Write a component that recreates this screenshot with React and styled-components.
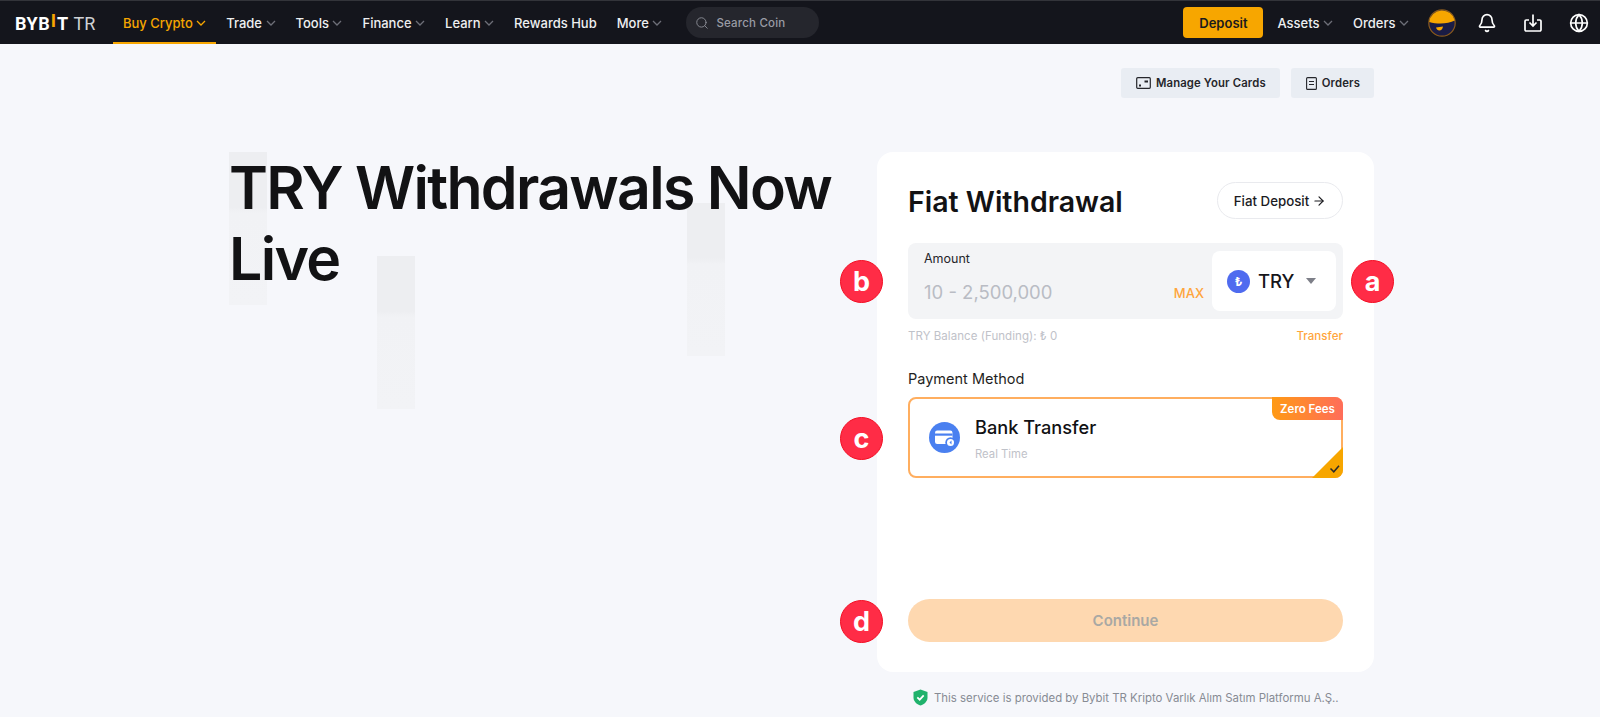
import React from "react";
import styled, { createGlobalStyle } from "styled-components";
import { Search, Bell, Globe, ArrowRight } from "lucide-react";

const GlobalStyle = createGlobalStyle`
  html, body {
    margin: 0;
    padding: 0;
    height: 717px;
    overflow: hidden;
    background: #f6f7fb;
    font-family: Inter, "Liberation Sans", sans-serif;
    color: #121214;
  }
  * { box-sizing: border-box; }
`;

const Header = styled.header`
  height: 44px;
  display: flex;
  align-items: center;
  justify-content: space-between;
  background: #14151c;
  border-top: 1px solid #33343a;
  padding: 0 11px 0 15px;
`;

const HeaderSide = styled.div`
  height: 100%;
  display: flex;
  align-items: center;
`;

const Logo = styled.div`
  width: 98px;
  margin-top: 1px;
  display: flex;
  align-items: baseline;
  font-family: Roboto, sans-serif;
  font-size: 18px;
  font-weight: 700;
  letter-spacing: 0.5px;
  color: #fff;
`;

const LogoMark = styled.span`
  color: #f7a600;
  position: relative;
  top: -3px;
  margin: 0 0.5px;
`;

const LogoSuffix = styled.span`
  margin-left: 5px;
  font-weight: 400;
  color: #cfd0d4;
  letter-spacing: 0;
`;

const NavItem = styled.a`
  height: 100%;
  display: flex;
  align-items: center;
  gap: 3.5px;
  padding: 2px 10px 0;
  font-size: 13px;
  font-weight: 500;
  white-space: nowrap;
  color: ${(p) => (p.$active ? "#f7a600" : "#eeeff1")};
  border-bottom: 2px solid ${(p) => (p.$active ? "#f7a600" : "transparent")};
`;

const Chevron = styled.svg`
  width: 10px;
  height: 10px;
  fill: none;
  stroke: ${(p) => (p.$active ? "#f7a600" : "#6d6f78")};
  stroke-width: 1.3;
`;

const SearchBox = styled.div`
  width: 133px;
  height: 31px;
  margin-left: 14px;
  padding: 0 9px;
  display: flex;
  align-items: center;
  gap: 7px;
  border-radius: 16px;
  background: #25262d;
  font-size: 11.5px;
  font-weight: 500;
  color: #9a9ca5;
  letter-spacing: 0.2px;
`;

const DepositButton = styled.button`
  width: 80px;
  height: 31px;
  margin-right: 4px;
  border: 0;
  border-radius: 4px;
  background: #f7a600;
  color: #1a1a1e;
  font: 600 13px Inter, sans-serif;
`;

const Avatar = styled.svg`
  width: 28px;
  height: 28px;
  margin-left: 9px;
`;

const HeaderIcons = styled.div`
  margin-left: 21px;
  display: flex;
  align-items: center;
  gap: 26px;
  color: #fff;
`;

const Page = styled.main`
  width: 1145px;
  margin-left: 229px;
`;

const Toolbar = styled.div`
  padding-top: 24px;
  display: flex;
  justify-content: flex-end;
  gap: 11px;
`;

const ToolButton = styled.button`
  height: 30px;
  padding: 0 14px 0 15px;
  display: flex;
  align-items: center;
  gap: 5px;
  border: 0;
  border-radius: 3px;
  background: #e9edf3;
  color: #25262b;
  font: 600 11.3px Inter, sans-serif;
  letter-spacing: 0.15px;
`;

const Content = styled.div`
  margin-top: 54px;
  display: flex;
  justify-content: space-between;
`;

const Hero = styled.section`
  position: relative;
  width: 640px;
`;

const GhostBar = styled.div`
  position: absolute;
  left: ${(p) => p.$left}px;
  top: ${(p) => p.$top}px;
  width: 38px;
  height: 153px;
  background: linear-gradient(#edeef1 0%, #edeef1 36%, #f1f2f5 40%, #f2f3f6 100%);
`;

const HeroTitle = styled.h1`
  position: relative;
  margin: 0;
  font-size: 59px;
  line-height: 71px;
  font-weight: 600;
  letter-spacing: -1.7px;
  color: #121214;
`;

const Side = styled.div`
  width: 497px;
`;

const Card = styled.section`
  height: 520px;
  padding: 30px 31px;
  display: flex;
  flex-direction: column;
  border-radius: 16px;
  background: #fff;
`;

const CardHead = styled.div`
  display: flex;
  align-items: center;
  justify-content: space-between;
`;

const CardTitle = styled.h2`
  margin: 3px 0 0;
  font-size: 28.5px;
  line-height: 34px;
  font-weight: 600;
`;

const DepositLink = styled.button`
  width: 126px;
  height: 37px;
  display: flex;
  align-items: center;
  justify-content: center;
  gap: 3px;
  border: 1px solid #e9eaee;
  border-radius: 19px;
  background: #fff;
  color: #1b1b1f;
  font: 500 13.3px Inter, sans-serif;
`;

const AmountBox = styled.div`
  position: relative;
  height: 76px;
  margin-top: 24px;
  padding: 8px 7px 8px 16px;
  display: flex;
  align-items: stretch;
  justify-content: space-between;
  border-radius: 8px;
  background: #f3f4f6;
`;

const AmountField = styled.div`
  flex: 1;
  display: flex;
  flex-direction: column;
`;

const AmountLabel = styled.div`
  font-size: 12.5px;
  line-height: 16px;
  color: #25262b;
`;

const AmountRow = styled.div`
  margin-top: 12px;
  padding-right: 8px;
  display: flex;
  align-items: center;
  justify-content: space-between;
`;

const AmountHint = styled.div`
  font-size: 18.5px;
  line-height: 26px;
  color: #b9bcc4;
`;

const MaxLink = styled.span`
  margin-top: 2px;
  font-size: 13px;
  font-weight: 500;
  color: #ffa53c;
`;

const CurrencyPicker = styled.div`
  width: 124px;
  padding-left: 15px;
  display: flex;
  align-items: center;
  border-radius: 8px;
  background: #fff;
  font-size: 18.5px;
  font-weight: 500;
  color: #16161a;
`;

const CoinBadge = styled.span`
  width: 23px;
  height: 23px;
  margin-right: 8px;
  display: flex;
  align-items: center;
  justify-content: center;
  border-radius: 50%;
  background: #4f6bef;
  color: #fff;
  font-size: 12px;
  font-weight: 700;
`;

const Caret = styled.span`
  width: 0;
  height: 0;
  margin-left: 12px;
  border-left: 5px solid transparent;
  border-right: 5px solid transparent;
  border-top: 6.5px solid #7d7f88;
`;

const BalanceRow = styled.div`
  margin-top: 9px;
  display: flex;
  justify-content: space-between;
  font-size: 11.5px;
  line-height: 16px;
  letter-spacing: 0.05px;
  color: #bfc2c9;
`;

const TransferLink = styled.span`
  font-weight: 500;
  color: #ffa53c;
`;

const SectionLabel = styled.div`
  margin-top: 25px;
  font-size: 14.5px;
  line-height: 20px;
  color: #1f1f23;
`;

const MethodCard = styled.div`
  position: relative;
  height: 81px;
  margin-top: 8px;
  padding-left: 19px;
  display: flex;
  align-items: center;
  gap: 15px;
  border: 2px solid #ffae5f;
  border-radius: 8px;
  background: #fff;
`;

const MethodIcon = styled.svg`
  width: 31px;
  height: 31px;
  flex: none;
`;

const MethodText = styled.div`
  margin-top: 1px;
`;

const MethodName = styled.div`
  font-size: 18.2px;
  line-height: 24px;
  font-weight: 500;
  color: #111114;
`;

const MethodNote = styled.div`
  margin-top: 7px;
  font-size: 11.3px;
  line-height: 16px;
  color: #bfc2c9;
`;

const FeeTag = styled.div`
  position: absolute;
  top: -2px;
  right: -2px;
  width: 71px;
  height: 23px;
  display: flex;
  align-items: center;
  justify-content: center;
  border-radius: 0 8px 0 8px;
  background: linear-gradient(90deg, #ff9a14, #ff6d5a);
  color: #fff;
  font-size: 11.5px;
  font-weight: 600;
`;

const CornerMark = styled.svg`
  position: absolute;
  right: -2px;
  bottom: -2px;
  width: 31px;
  height: 31px;
`;

const ContinueButton = styled.button`
  position: relative;
  width: 100%;
  height: 43px;
  margin-top: auto;
  border: 0;
  border-radius: 22px;
  background: #fed8b0;
  color: #a9a8a4;
  font: 600 15px Inter, sans-serif;
`;

const Marker = styled.span`
  position: absolute;
  top: 50%;
  ${(p) => (p.$right ? "right: -51px;" : `left: ${p.$left ?? -68}px;`)}
  width: 43px;
  height: 43px;
  margin-top: -21px;
  display: flex;
  align-items: center;
  justify-content: center;
  border: 1px solid #f30d22;
  border-radius: 50%;
  background: #ff2c46;
  color: #fff;
  font: 700 27px/1 Inter, sans-serif;
`;

const Notice = styled.div`
  margin-top: 17px;
  padding-left: 36px;
  display: flex;
  align-items: center;
  gap: 6px;
  font-size: 11.4px;
  line-height: 16px;
  white-space: nowrap;
  color: #878b94;
`;

const Caretdown = ({ active }) => (
  <Chevron viewBox="0 0 10 10" $active={active}>
    <path d="M1 3l4 4 4-4" />
  </Chevron>
);

const navItems = [
  { label: "Buy Crypto", menu: true, active: true },
  { label: "Trade", menu: true },
  { label: "Tools", menu: true },
  { label: "Finance", menu: true },
  { label: "Learn", menu: true },
  { label: "Rewards Hub" },
  { label: "More", menu: true },
];

function App() {
  return (
    <>
      <GlobalStyle />
      <Header>
        <HeaderSide>
          <Logo>
            BYB<LogoMark>I</LogoMark>T<LogoSuffix>TR</LogoSuffix>
          </Logo>
          {navItems.map((item) => (
            <NavItem key={item.label} $active={item.active}>
              {item.label}
              {item.menu && <Caretdown active={item.active} />}
            </NavItem>
          ))}
          <SearchBox>
            <Search size={14} strokeWidth={1.6} color="#8b8d96" />
            Search Coin
          </SearchBox>
        </HeaderSide>
        <HeaderSide>
          <DepositButton>Deposit</DepositButton>
          <NavItem>
            Assets
            <Caretdown />
          </NavItem>
          <NavItem>
            Orders
            <Caretdown />
          </NavItem>
          <Avatar viewBox="0 0 28 28">
            <circle cx="14" cy="14" r="13.2" fill="#1a1c45" stroke="#8a5a1c" strokeWidth="1.2" />
            <path d="M1.2 13a13 13 0 0 1 25.6-1.500C20 15 10 15.500 1.2 13z" fill="#f7a600" />
            <path d="M8 18.500l7-1c-.4 2.800-1.800 4-3.600 4-1.600 0-2.900-1.200-3.400-3z" fill="#f7a600" />
          </Avatar>
          <HeaderIcons>
            <Bell size={20} strokeWidth={2} />
            <svg width="20" height="20" viewBox="0 0 20 20" fill="none" stroke="currentColor" strokeWidth="1.7">
              <path d="M6 7H3.200A1.200 1.200 0 0 0 2 8.200v8.600A1.200 1.200 0 0 0 3.200 18h13.600a1.200 1.200 0 0 0 1.200-1.200V8.200A1.200 1.200 0 0 0 16.800 7H14" />
              <path d="M10 1.500v11M6.500 9.500L10 13l3.500-3.500" />
            </svg>
            <Globe size={20} strokeWidth={2} />
          </HeaderIcons>
        </HeaderSide>
      </Header>
      <Page>
        <Toolbar>
          <ToolButton>
            <svg width="15" height="12" viewBox="0 0 15 12" fill="none" stroke="#25262b" strokeWidth="1.2">
              <rect x="0.700" y="0.700" width="13.600" height="10.600" rx="1" />
              <path d="M8.500 4.500h3.500M3 8.500h2" strokeWidth="1.800" />
            </svg>
            Manage Your Cards
          </ToolButton>
          <ToolButton>
            <svg width="11" height="13" viewBox="0 0 11 13" fill="none" stroke="#25262b" strokeWidth="1.100">
              <rect x="0.600" y="0.600" width="9.800" height="11.800" rx="1" />
              <path d="M3 4.500h5M3 7.500h5" />
            </svg>
            Orders
          </ToolButton>
        </Toolbar>
        <Content>
          <Hero>
            <GhostBar $left={0} $top={0} />
            <GhostBar $left={148} $top={104} />
            <GhostBar $left={458} $top={51} />
            <HeroTitle>TRY Withdrawals Now Live</HeroTitle>
          </Hero>
          <Side>
            <Card>
              <CardHead>
                <CardTitle>Fiat Withdrawal</CardTitle>
                <DepositLink>
                  Fiat Deposit
                  <ArrowRight size={14} strokeWidth={2} />
                </DepositLink>
              </CardHead>
              <AmountBox>
                <Marker>b</Marker>
                <AmountField>
                  <AmountLabel>Amount</AmountLabel>
                  <AmountRow>
                    <AmountHint>10 - 2,500,000</AmountHint>
                    <MaxLink>MAX</MaxLink>
                  </AmountRow>
                </AmountField>
                <CurrencyPicker>
                  <CoinBadge>₺</CoinBadge>
                  TRY
                  <Caret />
                </CurrencyPicker>
                <Marker $right>a</Marker>
              </AmountBox>
              <BalanceRow>
                <span>TRY Balance (Funding): ₺ 0</span>
                <TransferLink>Transfer</TransferLink>
              </BalanceRow>
              <SectionLabel>Payment Method</SectionLabel>
              <MethodCard>
                <Marker $left={-70}>c</Marker>
                <MethodIcon viewBox="0 0 31 31">
                  <circle cx="15.500" cy="15.500" r="15.500" fill="#4a80f0" />
                  <rect x="6" y="8.500" width="17.500" height="13.500" rx="2.200" fill="#fff" />
                  <rect x="6" y="11.500" width="17.500" height="2.200" fill="#4a80f0" />
                  <circle cx="21.500" cy="20.500" r="5.200" fill="#4a80f0" />
                  <circle cx="21.500" cy="20.500" r="3.500" fill="#fff" />
                  <path d="M22.500 18.500l-2 2 2 2z" fill="#4a80f0" />
                </MethodIcon>
                <MethodText>
                  <MethodName>Bank Transfer</MethodName>
                  <MethodNote>Real Time</MethodNote>
                </MethodText>
                <FeeTag>Zero Fees</FeeTag>
                <CornerMark viewBox="0 0 31 31">
                  <path d="M31 0v23a8 8 0 0 1-8 8H0z" fill="#f7a600" />
                  <path d="M18.500 21.500l3.300 3.300 5.200-6" fill="none" stroke="#2a2a2a" strokeWidth="1.500" />
                </CornerMark>
              </MethodCard>
              <ContinueButton>
                <Marker>d</Marker>
                Continue
              </ContinueButton>
            </Card>
            <Notice>
              <svg width="15" height="17" viewBox="0 0 15 17">
                <path d="M7.500 0.500L14.500 3v5.500c0 3.800-3 6.700-7 8-4-1.300-7-4.200-7-8V3z" fill="#20b26c" />
                <path d="M4.300 8.300l2.400 2.400 4-4.300" fill="none" stroke="#fff" strokeWidth="1.700" />
              </svg>
              This service is provided by Bybit TR Kripto Varlık Alım Satım Platformu A.Ş..
            </Notice>
          </Side>
        </Content>
      </Page>
    </>
  );
}

export default App;
